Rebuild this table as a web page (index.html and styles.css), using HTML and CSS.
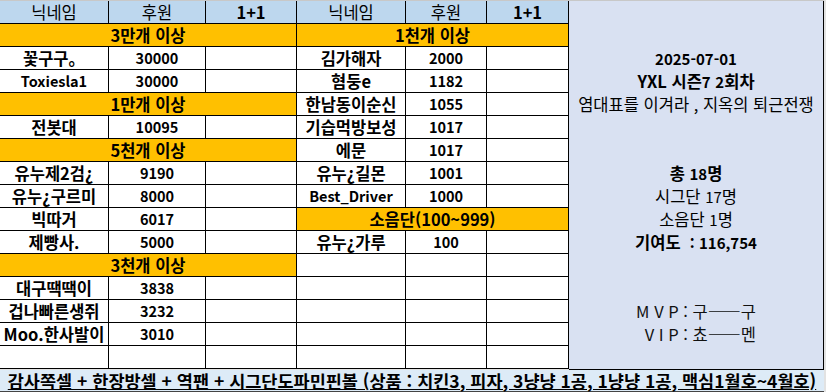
FILE: index.html
```html
<!DOCTYPE html>
<html lang="ko">
<head>
<meta charset="utf-8">
<link rel="stylesheet" href="styles.css">
</head>
<body>
<div class="sheet">
  <div class="top">
    <div class="tbl left">
      <div class="c h">닉네임</div><div class="c h">후원</div><div class="c h b">1+1</div>
      <div class="c sec">3만개 이상</div>
      <div class="c">꽃구구。</div><div class="c n">30000</div><div class="c"></div>
      <div class="c lat">Toxiesla1</div><div class="c n">30000</div><div class="c"></div>
      <div class="c sec">1만개 이상</div>
      <div class="c">전봇대</div><div class="c n">10095</div><div class="c"></div>
      <div class="c sec">5천개 이상</div>
      <div class="c">유누제2검¿</div><div class="c n">9190</div><div class="c"></div>
      <div class="c">유누¿구르미</div><div class="c n">8000</div><div class="c"></div>
      <div class="c">빅따거</div><div class="c n">6017</div><div class="c"></div>
      <div class="c">제빵사.</div><div class="c n">5000</div><div class="c"></div>
      <div class="c sec">3천개 이상</div>
      <div class="c">대구땍땍이</div><div class="c n">3838</div><div class="c"></div>
      <div class="c">겁나빠른생쥐</div><div class="c n">3232</div><div class="c"></div>
      <div class="c">Moo.한사발이</div><div class="c n">3010</div><div class="c"></div>
      <div class="c"></div><div class="c"></div><div class="c"></div>
    </div>
    <div class="tbl right">
      <div class="c h">닉네임</div><div class="c h">후원</div><div class="c h b">1+1</div>
      <div class="c sec">1천개 이상</div>
      <div class="c">김가해자</div><div class="c n">2000</div><div class="c"></div>
      <div class="c">혐둥e</div><div class="c n">1182</div><div class="c"></div>
      <div class="c">한남동이순신</div><div class="c n">1055</div><div class="c"></div>
      <div class="c">기습먹방보성</div><div class="c n">1017</div><div class="c"></div>
      <div class="c">에문</div><div class="c n">1017</div><div class="c"></div>
      <div class="c">유누¿길몬</div><div class="c n">1001</div><div class="c"></div>
      <div class="c lat">Best_Driver</div><div class="c n">1000</div><div class="c"></div>
      <div class="c sec">소음단(100~999)</div>
      <div class="c">유누¿가루</div><div class="c n">100</div><div class="c"></div>
      <div class="c"></div><div class="c"></div><div class="c"></div>
      <div class="c"></div><div class="c"></div><div class="c"></div>
      <div class="c"></div><div class="c"></div><div class="c"></div>
      <div class="c"></div><div class="c"></div><div class="c"></div>
      <div class="c"></div><div class="c"></div><div class="c"></div>
    </div>
    <div class="panel">
      <div class="p b r2 num">2025-07-01</div>
      <div class="p b r3"><span>YXL 시즌<span class="sn">7</span> <span class="sn">2</span>회차</span></div>
      <div class="p r4">염대표를 이겨라 , 지옥의 퇴근전쟁</div>
      <div class="p b r7"><span>총 <span class="sn">18</span>명</span></div>
      <div class="p r8"><span>시그단 <span class="sn">17</span>명</span></div>
      <div class="p r9"><span>소음단 <span class="sn">1</span>명</span></div>
      <div class="p b r10"><span>기여도 &nbsp;<span class="sn">: 116,754</span></span></div>
      <div class="mvp">
        <div class="ml">M V P : 구——구</div>
        <div class="ml">V I P : 쵸——멘</div>
      </div>
    </div>
  </div>
  <div class="footer"><span class="ft">감사쪽셀 + 한장방셀 + 역팬 + 시그단도파민핀볼 (상품 : 치킨3, 피자, 3냥냥 1공, 1냥냥 1공, 맥심1월호~4월호)</span></div>
</div>
</body>
</html>
```

FILE: styles.css
```css
* { box-sizing: border-box; margin: 0; padding: 0; }
html, body { width: 826px; height: 392px; overflow: hidden; }
body {
  background: #e2e2e2;
  font-family: "Noto Sans CJK KR", "Noto Sans", sans-serif;
  font-size: 16.5px;
  color: #000;
}
.sheet { width: 824px; border-top: 1px solid #c8c8c8; }
.top { display: flex; }
.tbl { display: grid; grid-auto-rows: 23px; }
.left { grid-template-columns: 109px 97px 91px; }
.right { grid-template-columns: 109px 81px 82px; }
.c {
  background: #fff;
  border-right: 1px solid #000;
  border-bottom: 1px solid #000;
  display: flex;
  align-items: center;
  justify-content: center;
  font-weight: 700;
  white-space: nowrap;
  line-height: 1;
}
.n { font-size: 14.5px; }
.lat { font-size: 14.5px; }
.h { background: #bdd7ee; font-weight: 400; }
.h.b { font-weight: 700; }
.sec { grid-column: 1 / -1; background: #ffc000; }
.panel {
  width: 255px;
  background: #d9e1f2;
  border-right: 1px solid #000;
  border-bottom: 1px solid #000;
  display: grid;
  grid-template-rows: repeat(16, 23px);
}
.p { display: flex; align-items: center; justify-content: center; white-space: nowrap; line-height: 1; }
.num { font-size: 15px; }
.sn { font-size: 15px; }
.b { font-weight: 700; }
.r2 { grid-row: 3; }
.r3 { grid-row: 4; }
.r4 { grid-row: 5; }
.r7 { grid-row: 8; }
.r8 { grid-row: 9; }
.r9 { grid-row: 10; }
.r10 { grid-row: 11; }
.mvp {
  grid-row: 14 / 16;
  justify-self: center;
  display: grid;
  grid-template-rows: 23px 23px;
  text-align: right;
}
.ml { display: flex; align-items: center; justify-content: flex-end; white-space: nowrap; line-height: 1; color: #111; }
.footer {
  height: 22px;
  background: #ddebf7;
  border-bottom: 1px solid #444;
  display: flex;
  align-items: center;
  justify-content: center;
}
.ft { font-weight: 700; font-size: 17.5px; text-decoration: underline; white-space: nowrap; line-height: 1; }
```
